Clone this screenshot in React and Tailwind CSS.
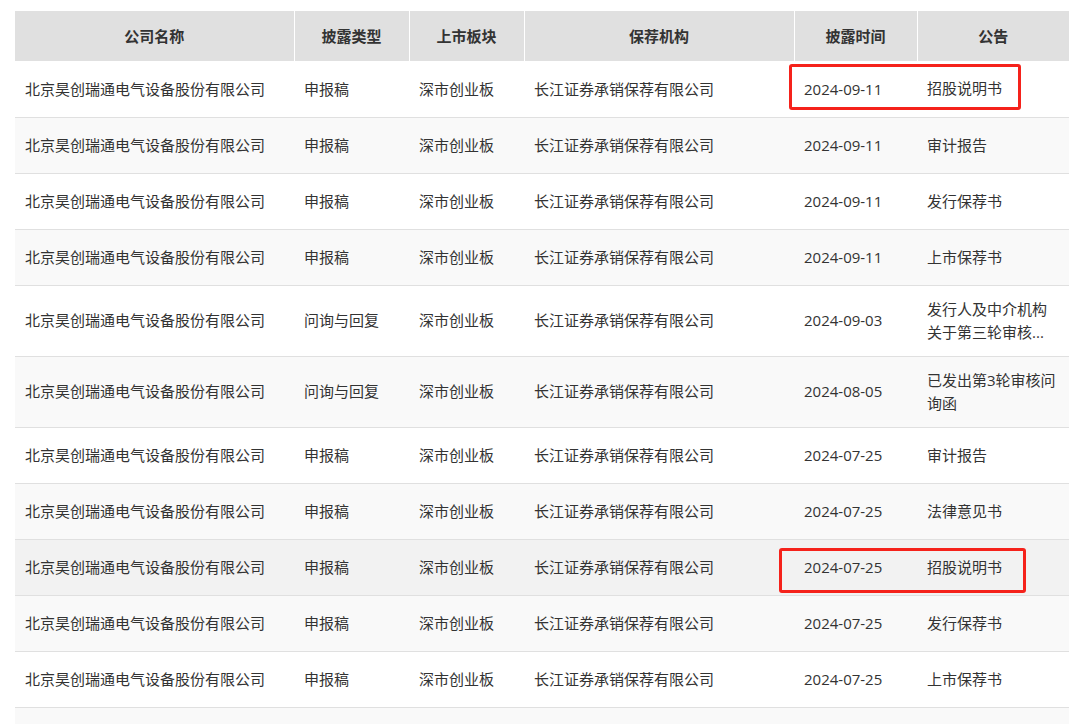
const cols = [
  { label: '公司名称', w: 'w-[279px]' },
  { label: '披露类型', w: 'w-[115px]' },
  { label: '上市板块', w: 'w-[115px]' },
  { label: '保荐机构', w: 'w-[270px]' },
  { label: '披露时间', w: 'w-[123px]' },
  { label: '公告', w: 'w-[152px]' },
];

const CO = '北京昊创瑞通电气设备股份有限公司';
const SP = '长江证券承销保荐有限公司';

const rows = [
  ['申报稿', '2024-09-11', '招股说明书'],
  ['申报稿', '2024-09-11', '审计报告'],
  ['申报稿', '2024-09-11', '发行保荐书'],
  ['申报稿', '2024-09-11', '上市保荐书'],
  ['问询与回复', '2024-09-03', '发行人及中介机构关于第三轮审核...', true],
  ['问询与回复', '2024-08-05', '已发出第3轮审核问询函', true],
  ['申报稿', '2024-07-25', '审计报告'],
  ['申报稿', '2024-07-25', '法律意见书'],
  ['申报稿', '2024-07-25', '招股说明书'],
  ['申报稿', '2024-07-25', '发行保荐书'],
  ['申报稿', '2024-07-25', '上市保荐书'],
];

export default function App() {
  return (
    <div className="relative h-[724px] overflow-hidden bg-white pt-[11px] pl-[15px] text-[15px] text-[#333]"
      style={{ fontFamily: '"Open Sans", "Noto Sans CJK SC", sans-serif' }}>
      <table className="w-[1054px] table-fixed border-collapse">
        <thead>
          <tr className="h-[50px] bg-[#e0e0e0]">
            {cols.map((c, i) => (
              <th key={c.label} className={`${c.w} font-bold ${i < cols.length - 1 ? 'border-r border-white' : ''}`}>{c.label}</th>
            ))}
          </tr>
        </thead>
        <tbody>
          {rows.map((r, i) => (
            <tr key={i}
              className={`border-b border-[#e0e0e0] ${r[3] ? 'h-[71px]' : 'h-[56px]'} ${i === 8 ? 'bg-[#f2f2f2]' : i % 2 ? 'bg-[#f9f9f9]' : 'bg-white'}`}>
              <td className="px-[10px]">{CO}</td>
              <td className="px-[10px]">{r[0]}</td>
              <td className="px-[10px]">{'深市创业板'}</td>
              <td className="px-[10px]">{SP}</td>
              <td className="px-[10px]">{r[1]}</td>
              <td className="px-[10px] leading-[23px]">{r[2]}</td>
            </tr>
          ))}
          <tr className="h-[56px] bg-[#f9f9f9]"><td colSpan={6} /></tr>
        </tbody>
      </table>
      <div className="absolute left-[789px] top-[64px] h-[46px] w-[232px] rounded-[3px] border-[3px] border-[#f5221b]" />
      <div className="absolute left-[779px] top-[548px] h-[45px] w-[247px] rounded-[3px] border-[3px] border-[#f5221b]" />
    </div>
  );
}
